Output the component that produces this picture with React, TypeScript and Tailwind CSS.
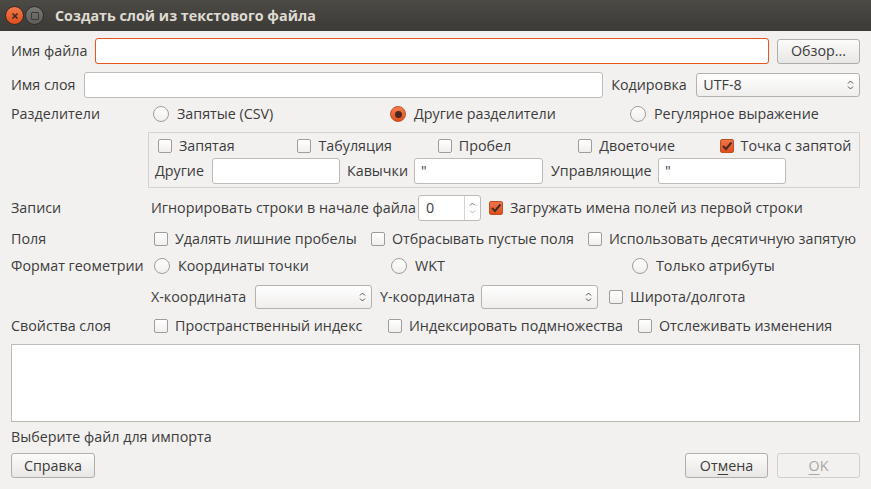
import React from 'react';

const font = { fontFamily: '"Open Sans", "Noto Sans", sans-serif' };

function Check({ on = false }: { on?: boolean }) {
  return on ? (
    <span className="inline-flex h-[14px] w-[14px] shrink-0 items-center justify-center rounded-[2px] border border-[#c2501f] bg-gradient-to-b from-[#f0764a] to-[#dd4e1b]">
      <svg width="12" height="12" viewBox="0 0 12 12">
        <path d="M2 6 L5 9 L10.5 2.5" fill="none" stroke="#4a2a1e" strokeWidth="2" />
      </svg>
    </span>
  ) : (
    <span className="inline-block h-[14px] w-[14px] shrink-0 rounded-[2px] border border-[#a09d98] bg-gradient-to-b from-[#ffffff] to-[#f0efee]" />
  );
}

function Radio({ on = false }: { on?: boolean }) {
  return on ? (
    <span className="inline-flex h-[16px] w-[16px] shrink-0 items-center justify-center rounded-full border border-[#c2501f] bg-gradient-to-b from-[#f47c50] to-[#df501d]">
      <span className="h-[7px] w-[7px] rounded-full bg-[#4a2a1e]" />
    </span>
  ) : (
    <span className="inline-block h-[16px] w-[16px] shrink-0 rounded-full border border-[#a09d98] bg-gradient-to-b from-[#ffffff] to-[#f0efee]" />
  );
}

function CheckItem({ label, on, w }: { label: string; on?: boolean; w: string }) {
  return (
    <div className={`flex items-center gap-[7px] ${w}`}>
      <Check on={on} />
      <span>{label}</span>
    </div>
  );
}

function RadioItem({ label, on, w }: { label: string; on?: boolean; w: string }) {
  return (
    <div className={`flex items-center gap-[8px] ${w}`}>
      <Radio on={on} />
      <span>{label}</span>
    </div>
  );
}

function Arrows() {
  return (
    <svg width="7" height="12" viewBox="0 0 7 12" className="shrink-0">
      <path d="M1 4.5 L3.5 2 L6 4.5" fill="none" stroke="#55524d" strokeWidth="1" />
      <path d="M1 7.5 L3.5 10 L6 7.5" fill="none" stroke="#55524d" strokeWidth="1" />
    </svg>
  );
}

function Combo({ text, w }: { text?: string; w: string }) {
  return (
    <div className={`flex h-[24px] items-center justify-between rounded-[3px] border border-[#b5b2ad] bg-gradient-to-b from-[#ffffff] to-[#efeeec] pl-[6px] pr-[5px] ${w}`}>
      <span>{text}</span>
      <Arrows />
    </div>
  );
}

function Field({ w, value, focus }: { w: string; value?: string; focus?: boolean }) {
  return (
    <div
      className={`flex h-[26px] items-center rounded-[3px] border bg-white px-[6px] ${
        focus ? 'border-[#e9541f]' : 'border-[#bebab5]'
      } ${w}`}
    >
      {value}
    </div>
  );
}

function Btn({ children, w, disabled }: { children: React.ReactNode; w: string; disabled?: boolean }) {
  return (
    <div
      className={`flex h-[25px] items-center justify-center rounded-[3px] border ${
        disabled
          ? 'border-[#d3d0cc] bg-[#f2f1f0] text-[#a9a7a3]'
          : 'border-[#b1ada7] bg-gradient-to-b from-[#fbfbfa] to-[#e9e7e5]'
      } ${w}`}
    >
      {children}
    </div>
  );
}

export default function App() {
  return (
    <div className="h-[489px] w-[871px] overflow-hidden bg-[#f2f1f0] text-[14.3px] text-[#3c3c3c]" style={font}>
      {/* title bar */}
      <div className="flex h-[31px] items-center bg-gradient-to-b from-[#4b4a45] to-[#3b3a36] pl-[5px]">
        <div className="flex h-[19px] w-[19px] items-center justify-center rounded-full border border-[#3a2a22] bg-gradient-to-b from-[#f3784a] to-[#dc4e1c]">
          <svg width="8" height="8" viewBox="0 0 8 8">
            <path d="M1.5 1.5 L6.5 6.5 M6.5 1.5 L1.5 6.5" stroke="#3a2a22" strokeWidth="1.6" />
          </svg>
        </div>
        <div className="ml-[1px] flex h-[19px] w-[19px] items-center justify-center rounded-full border border-[#2e2d2a] bg-gradient-to-b from-[#7a7873] to-[#5f5d58]">
          <span className="h-[8px] w-[8px] rounded-[1px] border-[1.5px] border-[#3a3935]" />
        </div>
        <span className="ml-[11px] text-[14.3px] font-bold text-[#dfdbd2]">Создать слой из текстового файла</span>
      </div>

      <div className="px-[11px]">
        {/* file */}
        <div className="mt-[7px] flex h-[26px] items-center">
          <span className="w-[84px] shrink-0">Имя файла</span>
          <Field w="w-[674px]" focus />
          <div className="ml-[8px]">
            <Btn w="w-[83px]">Обзор...</Btn>
          </div>
        </div>

        {/* layer name */}
        <div className="mt-[8px] flex h-[26px] items-center">
          <span className="w-[73px] shrink-0">Имя слоя</span>
          <Field w="w-[520px]" />
          <span className="ml-[8px] w-[85px] shrink-0">Кодировка</span>
          <Combo text="UTF-8" w="w-[164px]" />
        </div>

        {/* delimiters */}
        <div className="mt-[6px] flex h-[20px] items-center">
          <span className="w-[142px] shrink-0">Разделители</span>
          <RadioItem label="Запятые (CSV)" w="w-[237px]" />
          <RadioItem label="Другие разделители" on w="w-[240px]" />
          <RadioItem label="Регулярное выражение" w="w-[200px]" />
        </div>

        <div className="ml-[137px] mt-[8px] h-[56px] border border-[#d6d3cf]">
          <div className="mt-[5px] flex h-[16px] items-center pl-[9px]">
            <CheckItem label="Запятая" w="w-[140px]" />
            <CheckItem label="Табуляция" w="w-[141px]" />
            <CheckItem label="Пробел" w="w-[141px]" />
            <CheckItem label="Двоеточие" w="w-[142px]" />
            <CheckItem label="Точка с запятой" on w="w-[140px]" />
          </div>
          <div className="mt-[4px] flex h-[26px] items-center pl-[6px]">
            <span className="w-[57px] shrink-0">Другие</span>
            <Field w="w-[128px]" />
            <span className="ml-[7px] w-[67px] shrink-0">Кавычки</span>
            <Field w="w-[129px]" value={'"'} />
            <span className="ml-[8px] w-[107px] shrink-0">Управляющие</span>
            <Field w="w-[128px]" value={'"'} />
          </div>
        </div>

        {/* records */}
        <div className="mt-[7px] flex h-[26px] items-center">
          <span className="w-[140px] shrink-0">Записи</span>
          <span className="w-[267px] shrink-0">Игнорировать строки в начале файла</span>
          <div className="flex h-[26px] w-[63px] items-center rounded-[3px] border border-[#bebab5] bg-white">
            <span className="flex-1 pl-[7px]">0</span>
            <div className="flex h-full w-[16px] items-center justify-center border-l border-[#d6d3cf]">
              <svg width="7" height="14" viewBox="0 0 7 14">
                <path d="M1 4.5 L3.5 2 L6 4.5" fill="none" stroke="#7a7772" strokeWidth="1" />
                <path d="M1 9.5 L3.5 12 L6 9.5" fill="none" stroke="#b8b5b0" strokeWidth="1" />
              </svg>
            </div>
          </div>
          <div className="ml-[8px]">
            <CheckItem label="Загружать имена полей из первой строки" on w="w-[320px]" />
          </div>
        </div>

        {/* fields */}
        <div className="mt-[8px] flex h-[20px] items-center">
          <span className="w-[143px] shrink-0">Поля</span>
          <CheckItem label="Удалять лишние пробелы" w="w-[217px]" />
          <CheckItem label="Отбрасывать пустые поля" w="w-[217px]" />
          <CheckItem label="Использовать десятичную запятую" w="w-[270px]" />
        </div>

        {/* geometry */}
        <div className="mt-[7px] flex h-[20px] items-center">
          <span className="w-[143px] shrink-0">Формат геометрии</span>
          <RadioItem label="Координаты точки" w="w-[237px]" />
          <RadioItem label="WKT" w="w-[241px]" />
          <RadioItem label="Только атрибуты" w="w-[200px]" />
        </div>

        <div className="mt-[9px] flex h-[24px] items-center pl-[140px]">
          <span className="w-[104px] shrink-0">X-координата</span>
          <Combo w="w-[117px]" />
          <span className="ml-[8px] w-[101px] shrink-0">Y-координата</span>
          <Combo w="w-[117px]" />
          <div className="ml-[11px]">
            <CheckItem label="Широта/долгота" w="w-[160px]" />
          </div>
        </div>

        {/* layer props */}
        <div className="mt-[7px] flex h-[20px] items-center">
          <span className="w-[143px] shrink-0">Свойства слоя</span>
          <CheckItem label="Пространственный индекс" w="w-[234px]" />
          <CheckItem label="Индексировать подмножества" w="w-[250px]" />
          <CheckItem label="Отслеживать изменения" w="w-[200px]" />
        </div>

        <div className="mt-[8px] h-[78px] border border-[#bebab5] bg-white" />

        <div className="mt-[6px] flex h-[18px] items-center">Выберите файл для импорта</div>

        <div className="mt-[7px] flex items-center justify-between">
          <Btn w="w-[84px]">Справка</Btn>
          <div className="flex gap-[9px]">
            <Btn w="w-[83px]">
              <span>
                От<span className="underline underline-offset-[3px]">м</span>ена
              </span>
            </Btn>
            <Btn w="w-[83px]" disabled>
              <span>
                <span className="underline underline-offset-[3px]">O</span>K
              </span>
            </Btn>
          </div>
        </div>
      </div>
    </div>
  );
}
